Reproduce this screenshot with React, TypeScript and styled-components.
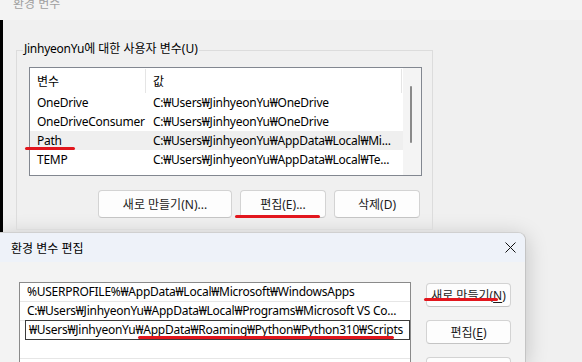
import React from "react";
import styled, { createGlobalStyle } from "styled-components";

const Global = createGlobalStyle`
  html, body { margin: 0; padding: 0; }
  body {
    width: 582px;
    height: 362px;
    overflow: hidden;
    background: #f0f0f0;
    font-family: "Noto Sans", "Noto Sans CJK KR", sans-serif;
    font-size: 12px;
    color: #000;
  }
  * { box-sizing: border-box; }
`;

const Screen = styled.div`
  position: relative;
  width: 582px;
  height: 362px;
  overflow: hidden;
  display: flex;
  flex-direction: column;
  background: #f0f0f0;
`;

/* ---------- background window ---------- */
const BgWindow = styled.div`
  height: 232px;
  flex: none;
  display: flex;
  flex-direction: column;
`;

const BgTitle = styled.div`
  height: 20px;
  flex: none;
  background: #f3f3f3;
  padding-left: 13px;
  color: #a0a0a0;
  overflow: hidden;
`;

const BgTitleText = styled.div`
  margin-top: -4px;
  line-height: 16px;
  font-size: 12px;
`;

const BgBody = styled.div`
  flex: 1;
  border-left: 3px solid #000;
  padding: 30px 0 0 13px;
  background: #f0f0f0;
`;

const GroupBox = styled.div`
  position: relative;
  width: 417px;
  height: 180px;
  border: 1px solid #dcdcdc;
  padding: 16px 0 0 12px;
`;

const GroupLabel = styled.div`
  position: absolute;
  top: -10px;
  left: 6px;
  padding: 0 1px;
  line-height: 16px;
  background: #f0f0f0;
  color: #000;
`;

const Latin = styled.span`
  letter-spacing: -0.25px;
`;

const ListView = styled.div`
  width: 393px;
  height: 109px;
  border: 1px solid #828790;
  background: #fff;
  display: flex;
  overflow: hidden;
`;

const ListMain = styled.div`
  width: 373px;
  flex: none;
  display: flex;
  flex-direction: column;
`;

const HeaderRow = styled.div`
  height: 25px;
  flex: none;
  display: grid;
  grid-template-columns: 116px 256px;
  align-items: stretch;
`;

const HeaderCell = styled.div`
  display: flex;
  align-items: center;
  padding-left: 7px;
  margin: 1px 0 0;
  border-right: 1px solid #e5e5e5;
`;

const Row = styled.div<{ $selected?: boolean }>`
  height: 19px;
  flex: none;
  display: grid;
  grid-template-columns: 116px 256px;
  align-items: center;
  background: ${(p) => (p.$selected ? "#efefef" : "transparent")};
`;

const Cell = styled.div`
  padding-left: 7px;
  white-space: nowrap;
  overflow: hidden;
  line-height: 19px;
  letter-spacing: -0.25px;
`;

const ScrollTrack = styled.div`
  width: 18px;
  flex: none;
  background: #f4f4f4;
  display: flex;
  justify-content: flex-start;
  padding: 18px 0 0 7px;
`;

const ScrollThumb = styled.div`
  width: 2px;
  height: 57px;
  border-radius: 1px;
  background: #8a8a8a;
`;

const ButtonRow = styled.div`
  width: 391px;
  margin-top: 14px;
  display: flex;
  justify-content: flex-end;
  gap: 8px;
`;

const WinButton = styled.button<{ $w: number; $h: number }>`
  width: ${(p) => p.$w}px;
  height: ${(p) => p.$h}px;
  padding: 0;
  border: 1px solid #d3d3d3;
  border-bottom-color: #c4c4c4;
  border-radius: 4px;
  background: #fdfdfd;
  font-family: inherit;
  font-size: 12px;
  color: #1b1b1b;
  flex: none;
`;

const Key = styled.span`
  text-decoration: underline;
  text-underline-offset: 2px;
`;

/* ---------- edit dialog ---------- */
const Dialog = styled.div`
  width: 526px;
  flex: 1;
  display: flex;
  flex-direction: column;
  background: #f3f3f3;
  border-top: 1px solid #d0d0d0;
  border-right: 1px solid #c4c4c4;
  border-top-right-radius: 8px;
  box-shadow: 0 4px 22px rgba(0, 0, 0, 0.2);
  overflow: hidden;
`;

const DialogTitle = styled.div`
  height: 29px;
  flex: none;
  background: #eef2f9;
  display: flex;
  align-items: center;
  justify-content: space-between;
  padding: 0 9px 0 11px;
`;

const DialogBody = styled.div`
  flex: 1;
  display: flex;
  gap: 15px;
  padding: 20px 0 0 19px;
`;

const PathList = styled.div`
  width: 392px;
  height: 100px;
  border: 1px solid #8a8a8a;
  border-bottom: none;
  background: #fff;
  display: flex;
  flex-direction: column;
`;

const PathRow = styled.div`
  height: 19px;
  flex: none;
  border-bottom: 1px solid #e6e6e6;
  padding-left: 7px;
  line-height: 18px;
  white-space: nowrap;
  overflow: hidden;
  letter-spacing: -0.25px;
`;

const PathEdit = styled.div`
  height: 20px;
  flex: none;
  margin: -1px 0 0 5px;
  width: 385px;
  border: 1px solid #3b3b3b;
  background: #fff;
  padding-left: 3px;
  line-height: 18px;
  white-space: nowrap;
  overflow: hidden;
  letter-spacing: -0.25px;
`;

const SideButtons = styled.div`
  display: flex;
  flex-direction: column;
  gap: 13px;
  padding-top: 1px;
`;

const Mark = styled.div`
  position: absolute;
  height: 3px;
  border-radius: 2px;
  background: #e2161d;
`;

const CloseIcon = () => (
  <svg width="11" height="11" viewBox="0 0 11 11">
    <path d="M0.5 0.5 L10.5 10.5 M10.5 0.5 L0.5 10.5" stroke="#111" strokeWidth="1" fill="none" />
  </svg>
);

const vars = [
  { name: "OneDrive", value: "C:₩Users₩JinhyeonYu₩OneDrive" },
  { name: "OneDriveConsumer", value: "C:₩Users₩JinhyeonYu₩OneDrive" },
  { name: "Path", value: "C:₩Users₩JinhyeonYu₩AppData₩Local₩Mi...", selected: true },
  { name: "TEMP", value: "C:₩Users₩JinhyeonYu₩AppData₩Local₩Te..." },
];

export default function App() {
  return (
    <Screen>
      <Global />
      <BgWindow>
        <BgTitle>
          <BgTitleText>환경 변수</BgTitleText>
        </BgTitle>
        <BgBody>
          <GroupBox>
            <GroupLabel>
              <Latin>JinhyeonYu</Latin>에 대한 사용자 변수(U)
            </GroupLabel>
            <ListView>
              <ListMain>
                <HeaderRow>
                  <HeaderCell>변수</HeaderCell>
                  <HeaderCell>값</HeaderCell>
                </HeaderRow>
                {vars.map((v) => (
                  <Row key={v.name} $selected={v.selected}>
                    <Cell>{v.name}</Cell>
                    <Cell>{v.value}</Cell>
                  </Row>
                ))}
              </ListMain>
              <ScrollTrack>
                <ScrollThumb />
              </ScrollTrack>
            </ListView>
            <ButtonRow>
              <WinButton $w={134} $h={28}>새로 만들기(N)...</WinButton>
              <WinButton $w={86} $h={28}>편집(E)...</WinButton>
              <WinButton $w={86} $h={28}>삭제(D)</WinButton>
            </ButtonRow>
          </GroupBox>
        </BgBody>
      </BgWindow>

      <Dialog>
        <DialogTitle>
          <span>환경 변수 편집</span>
          <CloseIcon />
        </DialogTitle>
        <DialogBody>
          <PathList>
            <PathRow>%USERPROFILE%₩AppData₩Local₩Microsoft₩WindowsApps</PathRow>
            <PathRow>C:₩Users₩JinhyeonYu₩AppData₩Local₩Programs₩Microsoft VS Co...</PathRow>
            <PathEdit>₩Users₩JinhyeonYu₩AppData₩Roaming₩Python₩Python310₩Scripts</PathEdit>
            <PathRow />
          </PathList>
          <SideButtons>
            <WinButton $w={85} $h={24}>
              새로 만들기(<Key>N</Key>)
            </WinButton>
            <WinButton $w={85} $h={24}>
              편집(<Key>E</Key>)
            </WinButton>
            <WinButton $w={85} $h={24}>
              찾아보기(<Key>B</Key>)...
            </WinButton>
          </SideButtons>
        </DialogBody>
      </Dialog>

      <Mark style={{ left: 25, top: 147, width: 50 }} />
      <Mark style={{ left: 235, top: 215, width: 85 }} />
      <Mark style={{ left: 138, top: 336, width: 256 }} />
      <Mark style={{ left: 424, top: 298, width: 74 }} />
    </Screen>
  );
}
